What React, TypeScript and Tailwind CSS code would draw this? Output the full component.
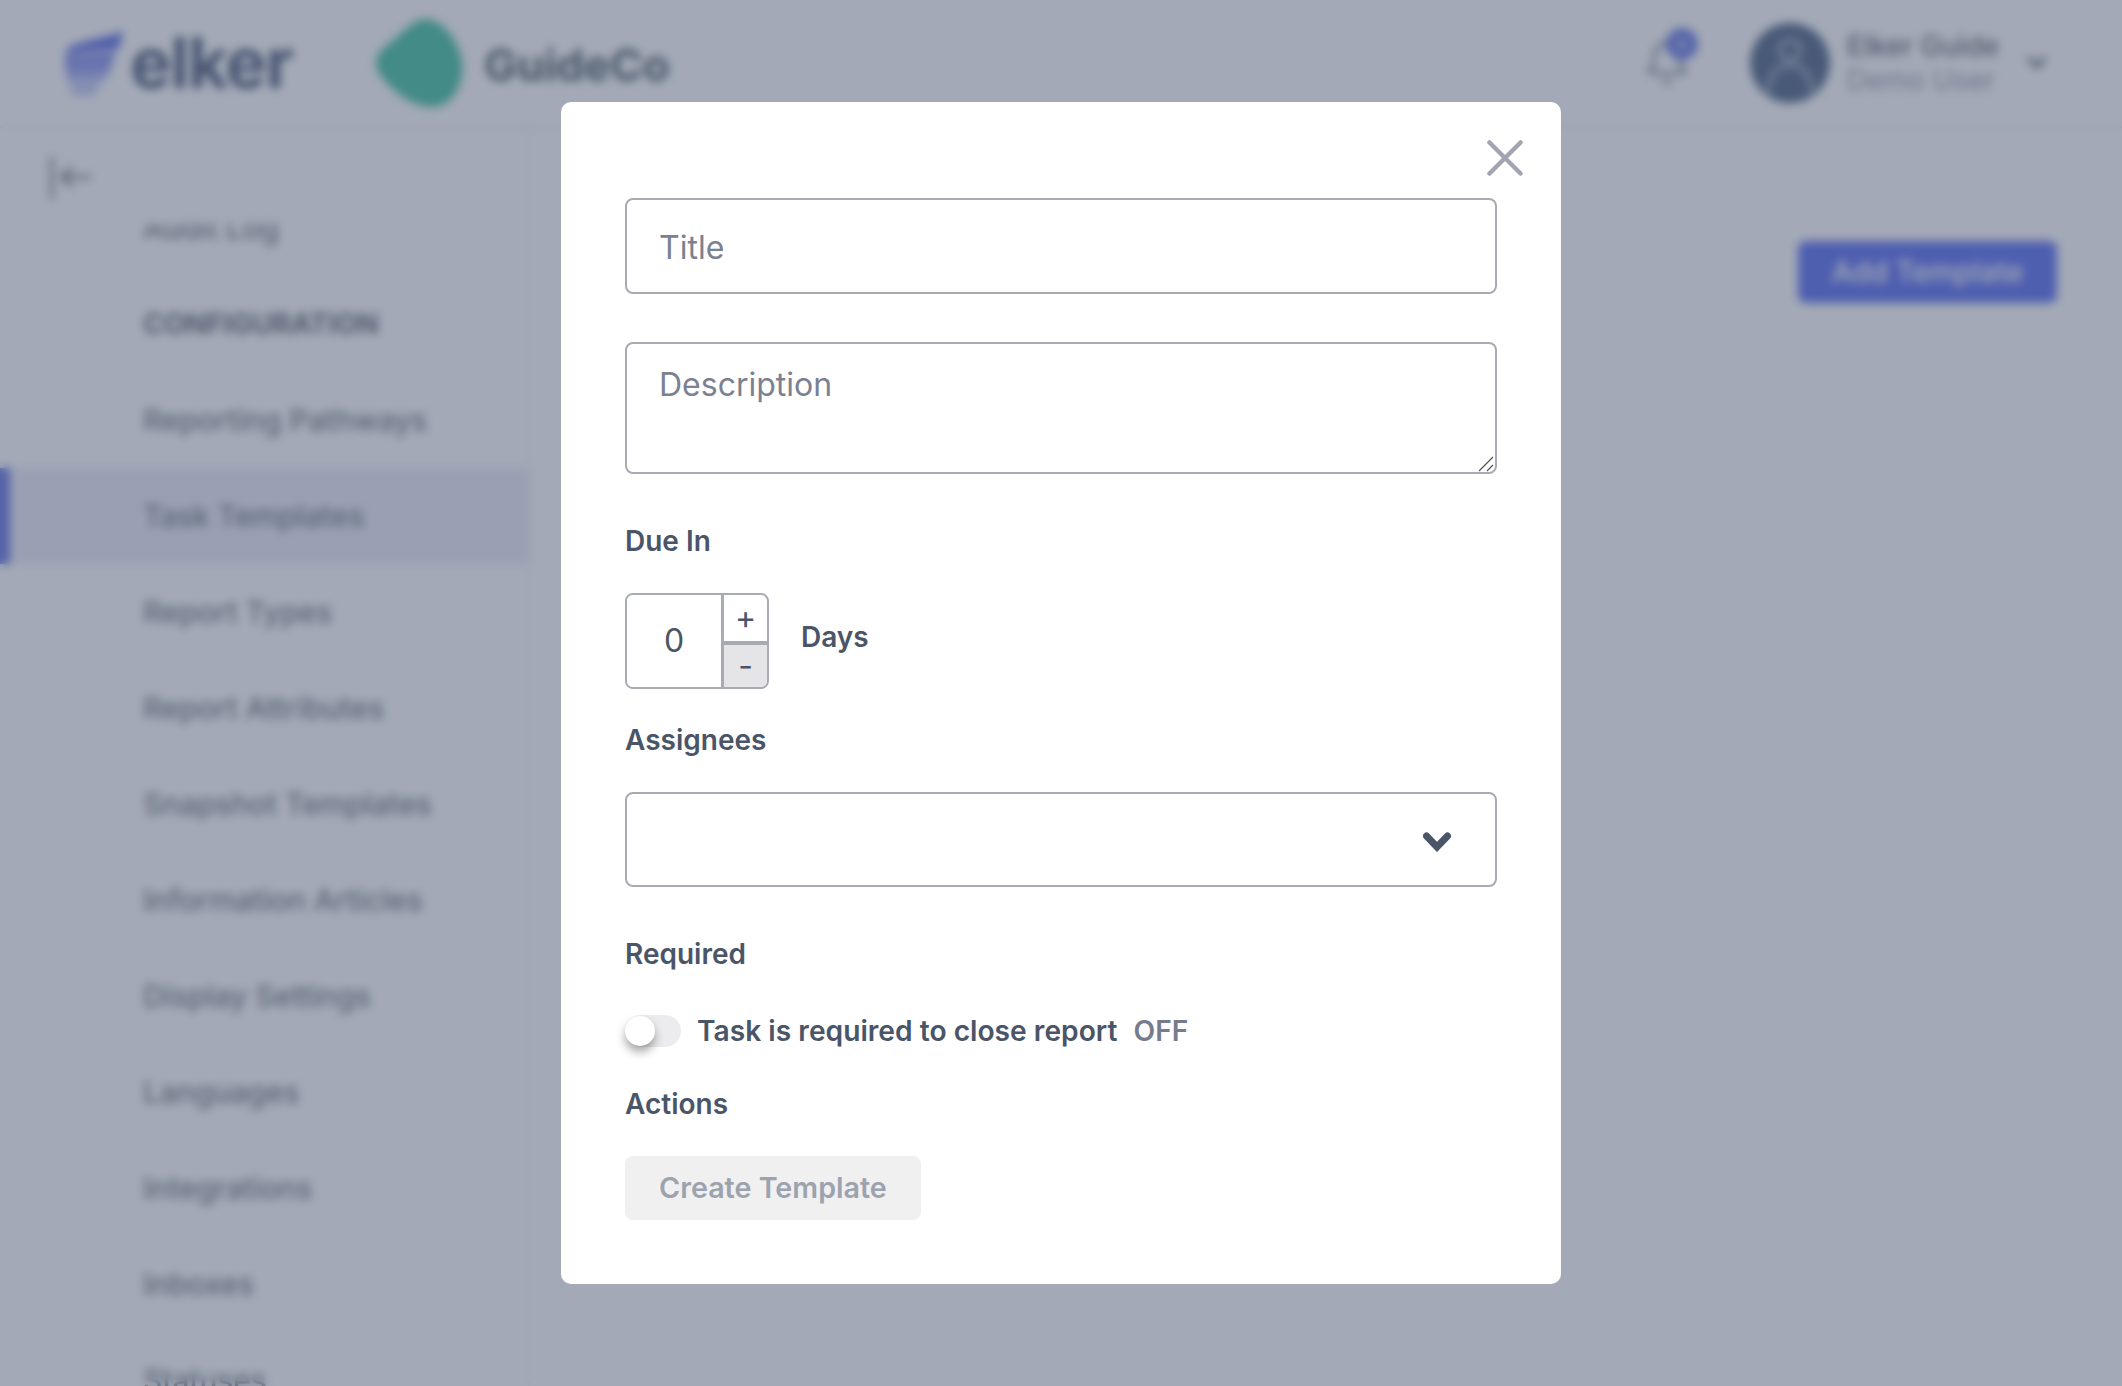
import { Bell } from "lucide-react";

const navItems = [
  "Audit Log",
  "CONFIGURATION",
  "Reporting Pathways",
  "Task Templates",
  "Report Types",
  "Report Attributes",
  "Snapshot Templates",
  "Information Articles",
  "Display Settings",
  "Languages",
  "Integrations",
  "Inboxes",
  "Statuses",
];

function Chevron({ className, weight = 6 }: { className: string; weight?: number }) {
  return (
    <svg viewBox="0 0 28 20" className={className} fill="none" stroke="currentColor" strokeWidth={weight} strokeLinecap="round" strokeLinejoin="miter">
      <path d="M3.5 4 L14 15 L24.5 4" />
    </svg>
  );
}

function Label({ children, className = "" }: { children: string; className?: string }) {
  return <div className={`h-10 text-[28px] leading-10 font-semibold text-[#4a5568] ${className}`}>{children}</div>;
}

function Background() {
  return (
    <div className="flex h-screen w-full flex-col overflow-hidden bg-white">
      <header className="flex h-[128px] shrink-0 items-center border-b-2 border-[#e2e8f0] pl-[63px] pr-[75px]">
        <svg viewBox="0 0 62 68" className="h-[68px] w-[62px] shrink-0">
          <path d="M4 20 C14 12 40 10 60 2 L56 20 C40 22 20 22 3 26 Z" fill="#2f43e0" />
          <path d="M2 28 L52 24 L50 32 L2 35 Z" fill="#3a4de4" />
          <path d="M2 37 L49 34 L47 42 L3 44 Z" fill="#5162ea" />
          <path d="M4 46 L46 44 L42 51 L5 53 Z" fill="#7f8def" />
          <path d="M6 55 L38 53 L32 66 L10 67 Z" fill="#b0b9f5" />
        </svg>
        <span className="ml-[5px] w-[207px] shrink-0 text-[70px] leading-none font-bold tracking-[-1.5px] text-[#1f2f57]">elker</span>
        <div className="h-[72px] w-px shrink-0 bg-[#eef0f4]" />
        <svg viewBox="0 0 88 88" className="ml-[37px] h-[88px] w-[88px] shrink-0">
          <path d="M52 0 C70 2 84 24 87 42 C90 64 78 86 60 88 C42 89 24 78 10 62 C-3 48 -1 36 10 28 C24 18 36 0 52 0 Z" fill="#0fb389" />
        </svg>
        <span className="ml-[21px] mt-[3px] text-[44px] leading-none font-bold text-[#1f3440]">GuideCo</span>
        <div className="ml-auto flex items-center">
          <div className="relative mr-[59px] h-[48px] w-[48px]">
            <Bell size={48} strokeWidth={1.5} className="text-[#475569]" />
            <span className="absolute -right-[7px] -top-[11px] flex h-[32px] w-[32px] items-center justify-center rounded-full bg-[#3f55e0] text-[14px] text-white">0</span>
          </div>
          <svg viewBox="0 0 80 80" className="h-[80px] w-[80px] shrink-0">
            <circle cx="40" cy="40" r="40" fill="#1e3a66" />
            <circle cx="40" cy="27" r="10" fill="none" stroke="#b9c2d0" strokeWidth="3" />
            <path d="M18 70 C18 52 28 42 40 42 C52 42 62 52 62 70" fill="none" stroke="#b9c2d0" strokeWidth="3" />
          </svg>
          <div className="ml-[17px] flex flex-col text-[28px] leading-[34px]">
            <span className="font-medium text-[#374151]">Elker Guide</span>
            <span className="text-[#7c8596]">Demo User</span>
          </div>
          <Chevron className="ml-[28px] h-[14px] w-[20px] text-[#374151]" />
        </div>
      </header>
      <div className="flex min-h-0 flex-1">
        <aside className="flex w-[530px] shrink-0 flex-col border-r-2 border-[#eef0f4]">
          <div className="h-[96px] shrink-0 pl-[50px] pt-[28px]">
            <svg viewBox="0 0 42 44" className="h-[44px] w-[42px] text-[#374151]" fill="none" stroke="currentColor" strokeWidth="3" strokeLinecap="round" strokeLinejoin="round">
              <path d="M2 2 V42" />
              <path d="M40 21 H13 M21 12 L12 21 L21 30" />
            </svg>
          </div>
          <div className="min-h-0 flex-1 overflow-hidden">
            <nav className="-mt-[44px] text-[29.7px] font-medium text-[#4b5563]">
              {navItems.map((item) => (
                <div
                  key={item}
                  className={
                    item === "Task Templates"
                      ? "flex h-[96px] items-center border-l-[10px] border-[#3d50dd] bg-[#e6e8fb] pl-[133px] text-[#4b5563]"
                      : item === "CONFIGURATION"
                        ? "flex h-[96px] items-center pl-[143px] text-[28px] font-bold text-[#374151]"
                        : "flex h-[96px] items-center pl-[143px]"
                  }
                >
                  {item}
                </div>
              ))}
            </nav>
          </div>
        </aside>
        <main className="flex flex-1 items-start justify-end pr-[65px] pt-[113px]">
          <button className="flex h-[62px] w-[259px] items-center justify-center rounded-lg bg-[#2d47f0] text-[29px] font-medium text-white">Add Template</button>
        </main>
      </div>
    </div>
  );
}

export default function App() {
  return (
    <div className="relative h-screen w-full overflow-hidden font-[Inter,sans-serif]">
      <Background />
      <div className="absolute inset-0 flex items-center justify-center bg-[#667085]/60 backdrop-blur-[5px]">
        <div className="relative w-[1000px] rounded-[10px] bg-white px-[64px] pb-[64px] pt-[96px]">
          <button className="absolute right-[38px] top-[38px] text-[#a1a5af]" aria-label="Close">
            <svg viewBox="0 0 36 36" className="block h-[36px] w-[36px]" fill="none" stroke="currentColor" strokeWidth="4.5" strokeLinecap="round">
              <path d="M2.5 2.5 L33.5 33.5 M33.5 2.5 L2.5 33.5" />
            </svg>
          </button>

          <input
            placeholder="Title"
            className="block h-[96px] w-full rounded-lg border-2 border-[#a8abb3] bg-white px-[32px] pt-[2px] text-[32px] text-[#374151] outline-none placeholder:text-[#7b8190]"
          />
          <div className="relative mt-[48px]">
            <textarea
              placeholder="Description"
              className="block h-[132px] w-full resize-none rounded-lg border-2 border-[#a8abb3] bg-white px-[32px] pb-[20px] pt-[17px] text-[32px] leading-[48px] text-[#374151] outline-none placeholder:text-[#7b8190]"
            />
            <svg viewBox="0 0 16 16" className="absolute bottom-[2px] right-[3px] h-[16px] w-[16px] text-[#555]" fill="none" stroke="currentColor" strokeWidth="1.3">
              <path d="M1 15 L15 1 M9 15 L15 9" />
            </svg>
          </div>

          <Label className="mt-[47px]">Due In</Label>
          <div className="mt-[32px] flex items-center">
            <div className="flex h-[96px] w-[144px] overflow-hidden rounded-lg border-2 border-[#a8abb3]">
              <input
                readOnly
                value="0"
                className="w-[94px] bg-white text-center text-[32px] text-[#4b5563] outline-none"
              />
              <div className="flex flex-1 flex-col border-l-[3px] border-[#a8abb3] text-[32px] leading-none text-[#4a5568]">
                <div className="flex h-[46px] items-center justify-center">+</div>
                <div className="flex flex-1 items-center justify-center border-t-4 border-[#a8abb3] bg-[#e5e5e7]">-</div>
              </div>
            </div>
            <span className="mb-[8px] ml-[32px] text-[28px] font-semibold text-[#4a5568]">Days</span>
          </div>

          <Label className="mt-[31px]">Assignees</Label>
          <div className="mt-[32px] flex h-[95px] w-full items-center justify-end rounded-lg border-2 border-[#a8abb3] bg-white pr-[44px]">
            <Chevron weight={7} className="mt-[4px] h-[20px] w-[28px] text-[#4a5568]" />
          </div>

          <Label className="mt-[47px]">Required</Label>
          <div className="mt-[37px] flex h-10 items-center">
            <div className="relative h-[32px] w-[56px] rounded-full bg-[#ececee]">
              <span className="absolute left-0 top-[1px] h-[30px] w-[30px] rounded-full bg-white shadow-[0_6px_10px_rgba(0,0,0,0.35)]" />
            </div>
            <span className="ml-[16px] text-[28.2px] font-semibold text-[#4a5568]">Task is required to close report</span>
            <span className="ml-[16px] text-[28.2px] font-semibold text-[#767c8b]">OFF</span>
          </div>

          <Label className="mt-[33px]">Actions</Label>
          <button className="mt-[32px] flex h-[64px] items-center rounded-lg bg-[#f0f0f1] px-[34px] text-[28.7px] font-semibold text-[#9ca3af]">
            Create Template
          </button>
        </div>
      </div>
    </div>
  );
}
